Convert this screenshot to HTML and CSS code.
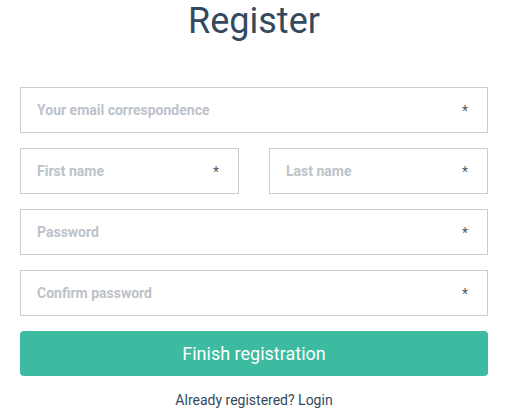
FILE: index.html
```html
<!DOCTYPE html>
<html>
<head>
<meta charset="utf-8">
<link rel="stylesheet" href="styles.css">
</head>
<body>
<div class="page">
  <h1 class="title">Register</h1>
  <form class="form">
    <div class="field"><input class="input" placeholder="Your email correspondence"><span class="req">*</span></div>
    <div class="row">
      <div class="field"><input class="input" placeholder="First name"><span class="req">*</span></div>
      <div class="field"><input class="input" placeholder="Last name"><span class="req">*</span></div>
    </div>
    <div class="field"><input class="input" type="password" placeholder="Password"><span class="req">*</span></div>
    <div class="field"><input class="input" type="password" placeholder="Confirm password"><span class="req">*</span></div>
    <button class="btn" type="button">Finish registration</button>
  </form>
  <p class="login">Already registered? Login</p>
</div>
</body>
</html>
```
FILE: styles.css
```css
* { box-sizing: border-box; }
body { margin: 0; background: #fff; font-family: Roboto, "Liberation Sans", sans-serif; }
.page { padding: 0 20px; }
.title { margin: 0; padding-top: 0; text-align: center; font-size: 36px; font-weight: 400; color: #34495e; line-height: 42px; }
.form { margin-top: 45px; display: flex; flex-direction: column; gap: 15px; }
.row { display: grid; grid-template-columns: 1fr 1fr; gap: 30px; }
.field { position: relative; }
.input { display: block; width: 100%; height: 46px; border: 1px solid #cccccc; border-radius: 0; padding: 0 16px; font-family: Roboto, sans-serif; font-size: 14px; font-weight: 700; color: #34495e; outline: none; }
.input::placeholder { color: #bcc2c9; opacity: 1; }
.req { position: absolute; right: 20px; top: 15px; font-size: 14px; color: #555b63; line-height: 18px; }
.btn { height: 45px; border: none; border-radius: 4px; background: #3cbba1; color: #fff; font-family: Roboto, sans-serif; font-size: 18px; cursor: pointer; }
.login { margin: 16px 0 0; text-align: center; font-size: 14px; color: #34495e; }
```
